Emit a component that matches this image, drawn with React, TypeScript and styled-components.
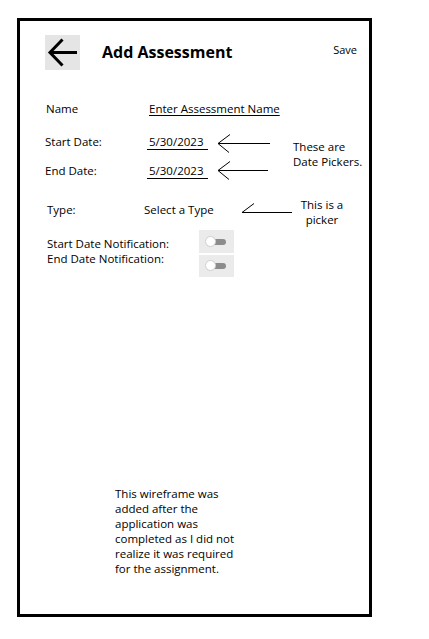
import React from 'react';
import styled, { createGlobalStyle } from 'styled-components';

const GlobalStyle = createGlobalStyle`
    body {
        margin: 0;
        background: #fff;
        font-family: 'Open Sans', 'Liberation Sans', sans-serif;
        color: #000;
    }
`;

const Frame = styled.div`
    box-sizing: border-box;
    width: 355px;
    height: 599px;
    margin: 18px 0 0 17px;
    border: 3px solid #000;
    display: flex;
    flex-direction: column;
`;

const Header = styled.div`
    display: flex;
    align-items: center;
    padding: 14px 12px 0 25px;
`;

const BackButton = styled.div`
    width: 35px;
    height: 35px;
    background: #e5e5e5;
    display: flex;
    align-items: center;
    justify-content: center;
`;

const Title = styled.h1`
    margin: 0 0 0 22px;
    font-size: 16px;
    font-weight: 700;
    line-height: 20px;
    position: relative;
    top: -1px;
`;

const SaveButton = styled.span`
    margin-left: auto;
    align-self: flex-start;
    margin-top: 7px;
    font-size: 11px;
    line-height: 16px;
`;

const Form = styled.div`
    padding-left: 25px;
    display: flex;
    flex-direction: column;
`;

const Row = styled.div<{ cols: string; top: number }>`
    display: grid;
    grid-template-columns: ${({ cols }) => cols};
    align-items: center;
    height: 29px;
    margin-top: ${({ top }) => top}px;
    font-size: 11.5px;
`;

const DateGrid = styled.div`
    display: grid;
    grid-template-columns: 102px 70px 76px auto;
    grid-template-rows: 29px 29px;
    align-items: center;
    margin-top: 4px;
    font-size: 11.5px;
`;

const Label = styled.span<{ indent?: number }>`
    padding-left: ${({ indent }) => indent ?? 0}px;
    white-space: nowrap;
`;

const LinkValue = styled.span`
    padding-left: 2px;
    text-decoration: underline;
    text-underline-offset: 2px;
    white-space: nowrap;
`;

const DateValue = styled.span`
    justify-self: start;
    padding: 0 0 0 2px;
    width: 59px;
    line-height: 15px;
    border-bottom: 1px solid #000;
`;

const ArrowCell = styled.div<{ shift: number }>`
    display: flex;
    margin-top: ${({ shift }) => shift}px;
`;

const Note = styled.div<{ center?: boolean; shift?: number }>`
    font-size: 11.5px;
    line-height: 15px;
    text-align: ${({ center }) => (center ? 'center' : 'left')};
    width: ${({ center }) => (center ? '48px' : 'auto')};
    margin-top: ${({ shift }) => shift ?? 0}px;
`;

const DateNote = styled(Note)`
    grid-column: 4;
    grid-row: 1 / span 2;
`;

const Notifications = styled.div`
    display: grid;
    grid-template-columns: 154px 35px;
    margin-top: 10px;
    font-size: 11.5px;
`;

const NotifyLabels = styled.div`
    padding: 6px 0 0 2px;
    line-height: 15px;
`;

const SwitchStack = styled.div`
    display: flex;
    flex-direction: column;
    gap: 2px;
`;

const SwitchBox = styled.div<{ h: number }>`
    height: ${({ h }) => h}px;
    background: #ebebeb;
    display: flex;
    align-items: center;
    padding-left: 12px;
`;

const Track = styled.div`
    position: relative;
    width: 15px;
    height: 6px;
    background: #8c8c8c;
    border-radius: 0 3px 3px 0;
`;

const Knob = styled.div`
    position: absolute;
    left: -6px;
    top: -3px;
    width: 11px;
    height: 11px;
    box-sizing: border-box;
    border-radius: 50%;
    background: #fff;
    border: 1px solid #cfcfcf;
`;

const Footer = styled.div`
    margin: 209px 0 0 95px;
    font-size: 11.5px;
    line-height: 15px;
`;

const BackArrow = () => (
    <svg width="35" height="35" viewBox="0 0 35 35">
        <path d="M5 17.5 H32 M17.5 4.5 L5 17.5 L17.5 30.5" fill="none" stroke="#000" strokeWidth="3" />
    </svg>
);

const HandArrow = ({ width, lower = true }: { width: number; lower?: boolean }) => (
    <svg width={width} height="20" viewBox={`0 0 ${width} 20`}>
        <path
            d={`M1 10.5 H${width - 1} M13 1.5 L1 10.5 ${lower ? 'L12 19.5' : ''}`}
            fill="none"
            stroke="#000"
            strokeWidth="1"
        />
    </svg>
);

const Toggle = ({ h }: { h: number }) => (
    <SwitchBox h={h}>
        <Track>
            <Knob />
        </Track>
    </SwitchBox>
);

export default function App() {
    return (
        <>
            <GlobalStyle />
            <Frame>
                <Header>
                    <BackButton>
                        <BackArrow />
                    </BackButton>
                    <Title>Add Assessment</Title>
                    <SaveButton>Save</SaveButton>
                </Header>
                <Form>
                    <Row cols="102px auto" top={24}>
                        <Label indent={1}>Name</Label>
                        <LinkValue>Enter Assessment Name</LinkValue>
                    </Row>
                    <DateGrid>
                        <Label>Start Date:</Label>
                        <DateValue>5/30/2023</DateValue>
                        <ArrowCell shift={3}>
                            <HandArrow width={54} />
                        </ArrowCell>
                        <DateNote shift={-4}>
                            These are
                            <br />
                            Date Pickers.
                        </DateNote>
                        <Label>End Date:</Label>
                        <DateValue>5/30/2023</DateValue>
                        <ArrowCell shift={-1}>
                            <HandArrow width={52} />
                        </ArrowCell>
                    </DateGrid>
                    <Row cols="99px 97px 57px auto" top={6}>
                        <Label indent={2}>Type:</Label>
                        <Label>Select a Type</Label>
                        <ArrowCell shift={6}>
                            <HandArrow width={52} lower={false} />
                        </ArrowCell>
                        <Note center shift={6}>
                            This is a
                            <br />
                            picker
                        </Note>
                    </Row>
                    <Notifications>
                        <NotifyLabels>
                            Start Date Notification:
                            <br />
                            End Date Notification:
                        </NotifyLabels>
                        <SwitchStack>
                            <Toggle h={23} />
                            <Toggle h={22} />
                        </SwitchStack>
                    </Notifications>
                </Form>
                <Footer>
                    This wireframe was
                    <br />
                    added after the
                    <br />
                    application was
                    <br />
                    completed as I did not
                    <br />
                    realize it was required
                    <br />
                    for the assignment.
                </Footer>
            </Frame>
        </>
    );
}
